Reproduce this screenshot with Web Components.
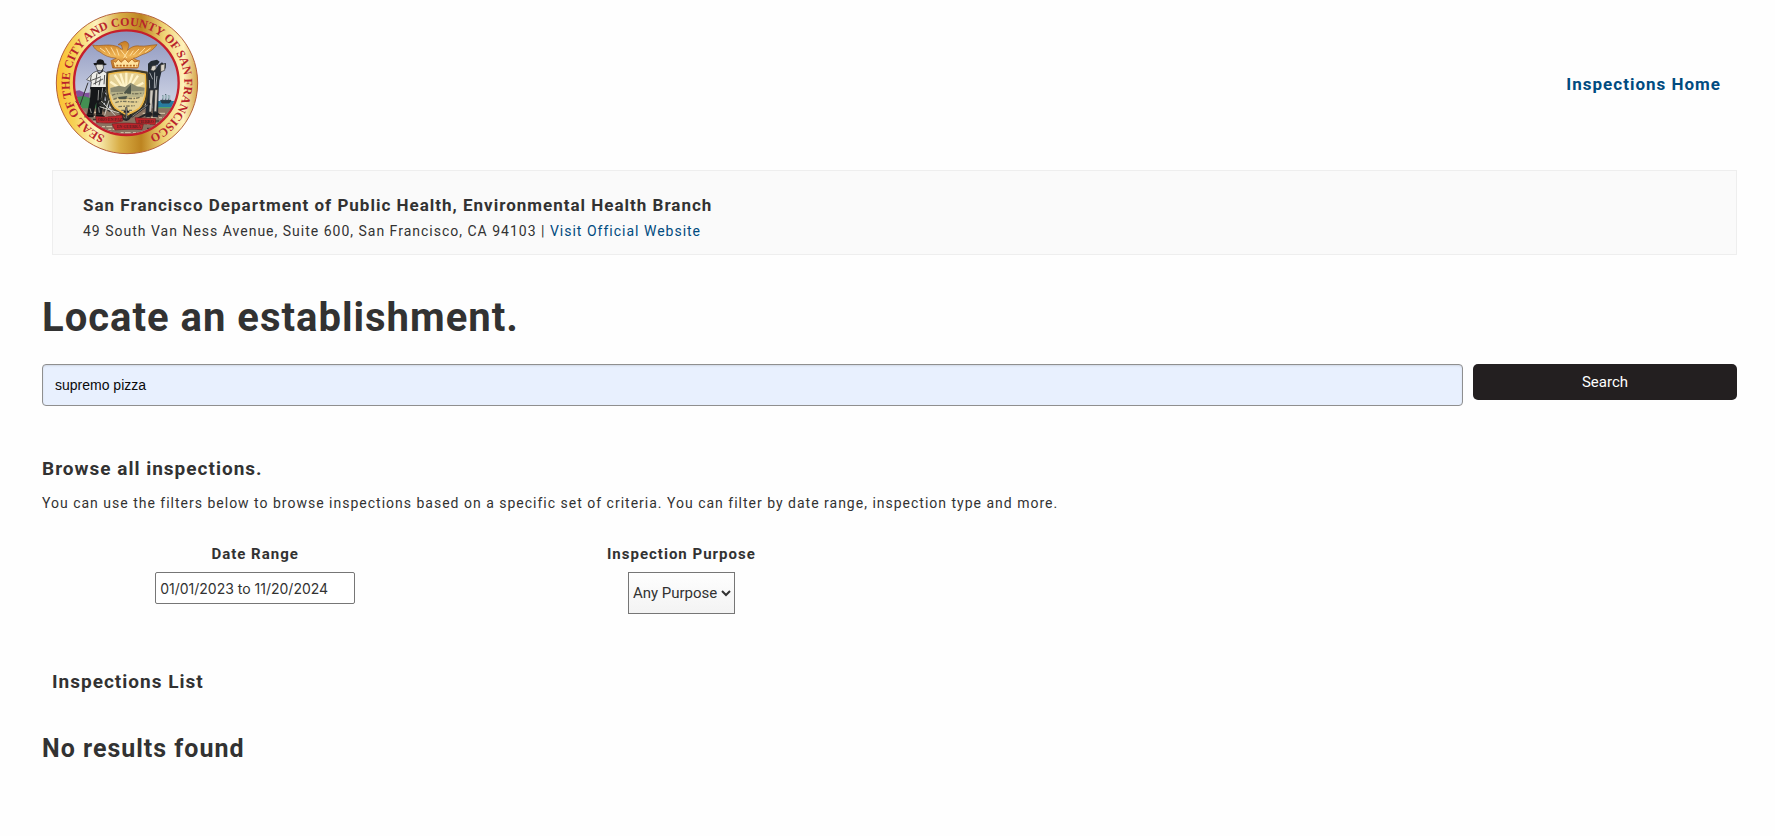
<!DOCTYPE html>
<html lang="en">
<head>
<meta charset="utf-8">
<meta name="viewport" content="width=device-width, initial-scale=1">
<title>Inspections</title>
<style>
  body {
    margin: 0;
    background: #fefefe;
    color: #323232;
    font-family: Roboto, "Liberation Sans", sans-serif;
    font-size: 14px;
    line-height: 24px;
    letter-spacing: 1px;
  }
</style>
</head>
<body>
<inspections-page></inspections-page>

<script>
class CitySeal extends HTMLElement {
  constructor() {
    super();
    this.attachShadow({ mode: 'open' });
  }

  connectedCallback() {
    this.shadowRoot.innerHTML = `
      <style>
        :host { display: block; width: 144px; height: 144px; letter-spacing: normal; }
        svg { display: block; width: 100%; height: 100%; }
        text { font-family: "Liberation Serif", serif; font-weight: 700; fill: #b8232b; }
      </style>
      <svg viewBox="49 34 432 432" role="img" aria-label="Seal of the City and County of San Francisco">
        <defs>
          <linearGradient id="gold" x1="0" y1="0" x2="1" y2="0">
            <stop offset="0" stop-color="#fdbe2d"/><stop offset=".13" stop-color="#f6d258"/>
            <stop offset=".28" stop-color="#fdf4bd"/><stop offset=".45" stop-color="#d8ad45"/>
            <stop offset=".6" stop-color="#bd8420"/><stop offset=".76" stop-color="#efd375"/>
            <stop offset=".9" stop-color="#fff2bb"/><stop offset="1" stop-color="#d5a54a"/>
          </linearGradient>
          <linearGradient id="sky" x1="0" y1="0" x2="0" y2="1">
            <stop offset="0" stop-color="#8b94bd"/><stop offset=".65" stop-color="#c9cfe2"/>
          </linearGradient>
          <linearGradient id="eagle" x1="0" y1="0" x2="0" y2="1">
            <stop offset="0" stop-color="#c77b22"/><stop offset=".55" stop-color="#f0b657"/><stop offset="1" stop-color="#b86a1b"/>
          </linearGradient>
          <clipPath id="disc"><circle cx="263" cy="249" r="154"/></clipPath>
          <path id="ring" d="M199 409 A172 172 0 1 1 331 409"/>
        </defs>
        <circle cx="265" cy="250" r="212" fill="url(#gold)" stroke="#b5623c" stroke-width="3"/>
        <circle cx="263" cy="249" r="156" fill="url(#sky)"/>
        <g clip-path="url(#disc)">
          <path d="M100 276l22-4 18 8 30-3v30h-70z" fill="#81519b"/>
          <path d="M100 294l34-5 42 12v30h-76z" fill="#438f52"/>
          <path d="M350 304h80v26h-80z" fill="#287ca0"/>
          <path d="M346 322h80v20h-80z" fill="#55a06b"/>
          <path d="M366 302h31l-5 8h-22zM372 300v-14M381 300v-17M390 300v-13" fill="#263b48" stroke="#263b48" stroke-width="3"/>
          <path d="M370 287h7v10h-7zM379 285h7v12h-7zM388 287h7v10h-7z" fill="#9db5bd"/>
          <path d="M100 326h330v90H100z" fill="#8a7361"/>
          <path d="M110 338h65M125 351h82M143 367h65M153 381h75M312 341h91M324 354h68M325 373h53M246 399h74M209 389h27" stroke="#cbbba0" stroke-width="4" stroke-dasharray="9 4 17 7"/>
          <path d="M119 346h60M144 359h29M169 388h28M330 364h42M325 386h40" stroke="#302b29" stroke-width="3" stroke-dasharray="12 7"/>
        </g>
        <!-- eagle and crown -->
        <path d="M162 136c23 5 42-4 69 3 11 2 14 10 21 10l-4-13-10-1 9-6 11-4c10 1 15 10 11 19l-3 9c9-10 22-16 36-14 19 2 33-3 53-4-12 17-26 24-42 29-15 6-18 11-29 12l16 8-4 21h-74l-5-22 16-7c-20-2-36-8-49-19-12-5-18-12-22-21z" fill="url(#eagle)" stroke="#9a591f" stroke-width="2"/>
        <path d="M184 145l16 12M201 144l13 20M217 143l13 24M234 147l7 21M336 145l-17 13M319 145l-18 19M301 148l-17 18M284 153l-10 15M246 151l19 24M269 152l-14 23" fill="none" stroke="#ffe0a0" stroke-width="3"/>
        <path d="M222 183l9 5 8-10 8 10 12-11 10 11 11-10 8 9 14-4-4 21h-70z" fill="#ffe39f" stroke="#b96d24" stroke-width="3"/>
        <path d="M233 198h63" stroke="#b66b22" stroke-width="5" stroke-dasharray="6 4"/>
        <!-- miner -->
        <path d="M164 191l10-2c-2-9 9-13 17-9 4 1 6 7 6 11l8 2-6 4h-32z" fill="#171719"/>
        <path d="M171 198l5-4h17l2 12-7 8-12-2z" fill="#dfddd5" stroke="#222" stroke-width="2"/>
        <path d="M176 207l4 12 7-2 5-12 1 18-14 6z" fill="#1d1d1e"/>
        <path d="M164 219l11-5 6 9 13-9 12 7-1 37-7 14h-43l3-26-14-6z" fill="#edede9" stroke="#242427" stroke-width="2"/>
        <path d="M158 227l-3 16 17-6 15-6M164 253l29-15M198 226l-2 28M175 221l-5 34M186 236l-5 21" fill="none" stroke="#555" stroke-width="3"/>
        <path d="M155 262h47l-5 42-8 41h-17l1-37-9 37h-19l8-40z" fill="#151719"/>
        <path d="M155 269l-2 25M180 271l-2 31M192 264l-4 35M154 326l4 14M180 323l2 16" fill="none" stroke="#92928f" stroke-width="3"/>
        <path d="M142 345h23v8h-29zM171 345h21l8 8h-29z" fill="#161618"/>
        <path d="M148 249l-25 70-12-14" fill="none" stroke="#333" stroke-width="3"/>
        <!-- sailor -->
        <path d="M328 192l9-8 18-4 8 6-6 9-6 1v12l8-12 11-8 5 4 7-2-1 16-12 8-7 29-2 32-2 78h-15l-2-47-5 47h-16l4-77-4-35 8-22z" fill="#242b33"/>
        <path d="M340 199l12-2v12l-8 5-8-3zM366 196l13-4-1 20-12 5z" fill="#d9d3c8" stroke="#333" stroke-width="2"/>
        <path d="M333 219l9 20M348 218l-1 48M332 241l1 25M355 229l-4 36" fill="none" stroke="#a1a5aa" stroke-width="3"/>
        <path d="M334 271h10l-5 66h-8zM349 270h8l-3 66h-8z" fill="#d0cbc1" stroke="#34302e" stroke-width="2"/>
        <path d="M324 339h18v9h-20zM345 339h12l12 8h-24z" fill="#202022"/>
        <!-- shield -->
        <path d="M207 219c38-11 77-10 117 0 4 55 4 86-19 112-15 12-29 14-40 23-9-10-28-14-39-25-23-27-23-67-19-110z" fill="#cfb06a" stroke="#443c27" stroke-width="7"/>
        <path d="M211 223c37-9 73-8 109 1 3 48 2 78-18 101-13 10-25 13-37 21-13-9-24-13-35-21-20-21-23-55-19-102z" fill="#e3cf93" stroke="#efb642" stroke-width="4"/>
        <path d="M263 279l-48-33M263 279l-35-53M263 279l-18-57M263 279V219M263 279l19-56M263 279l35-51M263 279l51-30" stroke="#fff3c8" stroke-width="7"/>
        <path d="M215 265l26-7 18 4 17-13 18 11 24 4-2 20H216z" fill="#8b8a70"/>
        <path d="M216 278l100-5-3 18-91 5z" fill="#b8b38a"/>
        <path d="M220 287c25-13 62 0 91-7M224 299c29-12 52 5 82-7M230 309c23-9 46 1 69-3M239 321l49-3M248 332h32" fill="none" stroke="#77735a" stroke-width="4" stroke-dasharray="11 4 5 3"/>
        <path d="M255 280l22-26v28zM238 292l28-3-5 10h-19z" fill="#4d5549"/>
        <!-- anchor, plough and vines -->
        <path d="M188 311c7-24-1-31 14-36M196 336c4-24 15-37 3-52M184 295l21 17M181 309l34 26M203 326c9-1 7-18 4-25" fill="none" stroke="#30312f" stroke-width="6"/>
        <path d="M188 304l45 47M183 321l59 19M211 302l-13 45" fill="none" stroke="#cccbc3" stroke-width="3"/>
        <path d="M263 323v40M255 336h17M249 343c0 13 9 17 14 18 8-1 12-8 14-17M278 352l56-41M291 360l35-18" fill="none" stroke="#252629" stroke-width="6"/>
        <path d="M263 324v32M281 350l46-34" stroke="#b6b6b1" stroke-width="2"/>
        <!-- motto ribbon -->
        <path d="M171 350c25 3 44 2 79-4l2 18c-31 8-55 7-79 4zM289 354l62 3-1 18-57-4zM220 373c28-5 61-3 94 1l-4 16c-29-2-56-1-81 1z" fill="#bd252b" stroke="#741f22" stroke-width="2"/>
        <text x="177" y="364" font-size="12" style="fill:#572020">ORO EN PAZ</text>
        <text x="298" y="369" font-size="12" style="fill:#572020">FIERRO</text>
        <text x="234" y="386" font-size="12" style="fill:#572020">EN GUERRA</text>
        <circle cx="263" cy="249" r="157" fill="none" stroke="#c51f2c" stroke-width="7"/>
        <text font-size="36"><textPath href="#ring">SEAL OF THE CITY AND COUNTY OF SAN FRANCISCO</textPath></text>
      </svg>
    `;
  }
}
customElements.define('city-seal', CitySeal);

class SiteHeader extends HTMLElement {
  constructor() {
    super();
    this.attachShadow({ mode: 'open' });
  }

  connectedCallback() {
    this.shadowRoot.innerHTML = `
      <style>
        :host { display: block; }
        header { display: flex; align-items: center; justify-content: space-between; padding: 11px 16px 15px 13px; }
        nav { padding-top: 3px; }
        a { color: #004b80; font-size: 17px; font-weight: 700; text-decoration: none; }
      </style>
      <header>
        <city-seal></city-seal>
        <nav><a href="#">Inspections Home</a></nav>
      </header>
    `;
  }
}
customElements.define('site-header', SiteHeader);

class AgencyCallout extends HTMLElement {
  constructor() {
    super();
    this.attachShadow({ mode: 'open' });
  }

  connectedCallback() {
    this.shadowRoot.innerHTML = `
      <style>
        :host { display: block; margin-left: 10px; padding: 20px 30px 11px; border: 1px solid #eee; background: #fafafa; }
        h2 { margin: 0; font-size: 17px; line-height: 28px; }
        p { margin: 0; }
        ::slotted(a) { color: #004b80; text-decoration: none; }
      </style>
      <h2><slot name="name"></slot></h2>
      <p><slot></slot></p>
    `;
  }
}
customElements.define('agency-callout', AgencyCallout);

class EstablishmentSearch extends HTMLElement {
  constructor() {
    super();
    this.attachShadow({ mode: 'open' });
  }

  connectedCallback() {
    this.shadowRoot.innerHTML = `
      <style>
        * { box-sizing: border-box; }
        :host { display: block; }
        h1 { margin: 0 0 18px; font-size: 40px; line-height: 56px; }
        form { display: flex; align-items: flex-start; gap: 10px; }
        input {
          flex: 1; min-width: 0; height: 42px; padding: 0 12px;
          border: 1px solid #8f8f8f; border-radius: 4px;
          background: #e8f0fe; box-shadow: inset 0 1px 2px rgba(10, 10, 10, 0.1);
          color: #0a0a0a; font: 14px "Liberation Sans", sans-serif;
        }
        button {
          width: 264px; height: 36px; padding: 0; border: 0; border-radius: 5px;
          background: #231f20; color: #fefefe; font: 15px Roboto, sans-serif; cursor: pointer;
        }
      </style>
      <h1>Locate an establishment.</h1>
      <form>
        <input type="text" aria-label="Establishment name" value="supremo pizza">
        <button type="submit">Search</button>
      </form>
    `;
    this.shadowRoot.querySelector('form').addEventListener('submit', (e) => e.preventDefault());
  }
}
customElements.define('establishment-search', EstablishmentSearch);

class InspectionFilters extends HTMLElement {
  constructor() {
    super();
    this.attachShadow({ mode: 'open' });
  }

  connectedCallback() {
    this.shadowRoot.innerHTML = `
      <style>
        * { box-sizing: border-box; }
        :host { display: block; }
        h2 { margin: 0 0 8px; font-size: 19px; line-height: 28px; }
        p { margin: 0; }
        #filters { display: grid; grid-template-columns: repeat(4, 1fr); margin: 27px -10px 0 0; }
        .filter { display: flex; flex-direction: column; align-items: center; gap: 6px; }
        label { font-size: 15px; font-weight: 700; }
        input {
          width: 200px; height: 32px; padding: 0 4px; border: 1px solid #767676; border-radius: 2px;
          background: #fff; color: #323232; font: 14px Inter, sans-serif;
        }
        select {
          height: 42px; padding: 0; border: 1px solid #767676; border-radius: 0;
          background: linear-gradient(#fefefe, #f3f3f3); color: #323232; font: 15px Roboto, sans-serif;
        }
      </style>
      <h2>Browse all inspections.</h2>
      <p>You can use the filters below to browse inspections based on a specific set of criteria. You can filter by date range, inspection type and more.</p>
      <div id="filters">
        <div class="filter">
          <label for="range">Date Range</label>
          <input id="range" type="text" value="01/01/2023 to 11/20/2024">
        </div>
        <div class="filter">
          <label for="purpose">Inspection Purpose</label>
          <select id="purpose"><option>Any Purpose</option></select>
        </div>
      </div>
    `;
  }
}
customElements.define('inspection-filters', InspectionFilters);

class InspectionResults extends HTMLElement {
  constructor() {
    super();
    this.attachShadow({ mode: 'open' });
  }

  connectedCallback() {
    this.shadowRoot.innerHTML = `
      <style>
        :host { display: block; }
        h2 { margin: 0 0 35px 10px; font-size: 19px; line-height: 28px; }
        h3 { margin: 0; font-size: 25px; line-height: 36px; }
      </style>
      <h2>Inspections List</h2>
      <h3><slot></slot></h3>
    `;
  }
}
customElements.define('inspection-results', InspectionResults);

class InspectionsPage extends HTMLElement {
  constructor() {
    super();
    this.attachShadow({ mode: 'open' });
  }

  connectedCallback() {
    this.shadowRoot.innerHTML = `
      <style>
        :host { display: block; padding: 0 38px 60px 42px; }
        establishment-search { margin-top: 35px; }
        inspection-filters { margin-top: 49px; }
        inspection-results { margin-top: 54px; }
      </style>
      <site-header></site-header>
      <main>
        <agency-callout>
          <span slot="name">San Francisco Department of Public Health, Environmental Health Branch</span>
          49 South Van Ness Avenue, Suite 600, San Francisco, CA 94103 | <a href="#">Visit Official Website</a>
        </agency-callout>
        <establishment-search></establishment-search>
        <inspection-filters></inspection-filters>
        <inspection-results>No results found</inspection-results>
      </main>
    `;
  }
}
customElements.define('inspections-page', InspectionsPage);
</script>
</body>
</html>
